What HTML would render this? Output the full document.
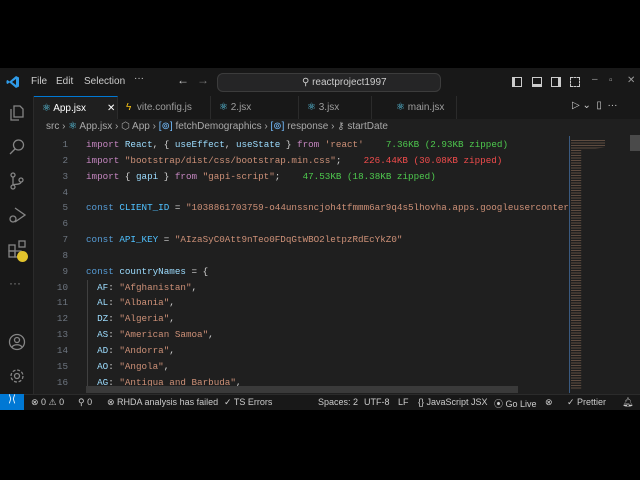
<!DOCTYPE html>
<html><head><meta charset="utf-8"><style>
*{margin:0;padding:0;box-sizing:border-box}
body{width:640px;height:480px;background:#000;position:relative;overflow:hidden;font-family:"Liberation Sans",sans-serif;color:#ccc}
.abs{position:absolute}
#win{left:0;top:68px;width:640px;height:342px;background:#1f1f1f}
#title{left:0;top:68px;width:640px;height:28px;background:#181818;font-size:10px;color:#ccc}
#act{left:0;top:96px;width:34px;height:298px;background:#181818;border-right:1px solid #2b2b2b}
#tabs{left:34px;top:96px;width:606px;height:23px;background:#181818;font-size:10px}
.tab{position:absolute;top:0;height:23px;line-height:23px;padding-left:8px;color:#9d9d9d;border-right:1px solid #2b2b2b}
.tab.on{background:#1f1f1f;color:#fff;border-top:1px solid #0078d4}
#crumb{left:46px;top:121px;font-size:10px;color:#a9a9a9;white-space:nowrap}
.ln{position:absolute;left:40px;width:28px;text-align:right;font-family:"Liberation Mono",monospace;font-size:9.25px;color:#6e7681}
.cd{position:absolute;left:86px;font-family:"Liberation Mono",monospace;font-size:9.25px;white-space:pre;color:#d4d4d4}
.k{color:#c586c0}.b{color:#569cd6}.v{color:#9cdcfe}.c{color:#4fc1ff}.s{color:#ce9178}.g{color:#4ec94e}.r{color:#f14c4c}
#status{left:0;top:394px;width:640px;height:16px;background:#181818;border-top:1px solid #2b2b2b;font-size:9px;color:#ccc}
#status span{position:absolute;top:2px;white-space:nowrap}
svg{position:absolute}
</style></head><body>
<div id="win" class="abs"></div>
<div id="title" class="abs">
 <svg style="left:6px;top:7px" width="14" height="14" viewBox="0 0 14 14"><path d="M10 1 L13 2.5 V11.5 L10 13 L3.5 7.5 L1.5 9 L0.5 8.3 V5.7 L1.5 5 L3.5 6.5 Z M10 4 L6 7 L10 10 Z" fill="#2f9be8"/></svg>
 <span class="abs" style="left:31px;top:8px">File</span>
 <span class="abs" style="left:56px;top:8px">Edit</span>
 <span class="abs" style="left:84px;top:8px">Selection</span>
 <span class="abs" style="left:134px;top:5px">···</span>
 <span class="abs" style="left:177px;top:5px;font-size:12px">←</span>
 <span class="abs" style="left:197px;top:5px;font-size:12px;color:#777">→</span>
 <div class="abs" style="left:217px;top:5px;width:224px;height:19px;border:1px solid #3c3c3c;border-radius:6px;background:#252526"></div>
 <span class="abs" style="left:302px;top:9px">⚲ reactproject1997</span>
 <div class="abs" style="left:512px;top:9px;width:10px;height:10px;border:1px solid #ccc;border-left-width:3px"></div>
 <div class="abs" style="left:532px;top:9px;width:10px;height:10px;border:1px solid #ccc;border-bottom-width:3px"></div>
 <div class="abs" style="left:551px;top:9px;width:10px;height:10px;border:1px solid #ccc;border-right-width:3px"></div>
 <div class="abs" style="left:570px;top:9px;width:10px;height:10px;border:1px dashed #ccc"></div>
 <span class="abs" style="left:592px;top:6px;color:#999">–</span>
 <span class="abs" style="left:609px;top:7px;color:#999">▫</span>
 <span class="abs" style="left:627px;top:7px;color:#999">✕</span>
</div>
<div id="act" class="abs">
 <svg style="left:8px;top:8px" width="18" height="18" viewBox="0 0 18 18" fill="none" stroke="#858585" stroke-width="1.3"><path d="M6 2h6l3 3v8H6z M3 5v11h8"/></svg>
 <svg style="left:8px;top:42px" width="18" height="18" viewBox="0 0 18 18" fill="none" stroke="#858585" stroke-width="1.3"><circle cx="10.5" cy="7" r="5"/><path d="M7 11 L2 16"/></svg>
 <svg style="left:8px;top:76px" width="18" height="18" viewBox="0 0 18 18" fill="none" stroke="#858585" stroke-width="1.3"><circle cx="5" cy="3" r="2"/><circle cx="5" cy="15" r="2"/><circle cx="13" cy="8" r="2"/><path d="M5 5v8 M13 10c0 3-8 2-8 3"/></svg>
 <svg style="left:8px;top:110px" width="18" height="18" viewBox="0 0 18 18" fill="none" stroke="#858585" stroke-width="1.3"><path d="M7 2l10 7-10 7"/><circle cx="5" cy="13" r="3"/></svg>
 <svg style="left:8px;top:144px" width="18" height="18" viewBox="0 0 18 18" fill="none" stroke="#858585" stroke-width="1.3"><rect x="1" y="5" width="6" height="6"/><rect x="1" y="11" width="6" height="6"/><rect x="7" y="11" width="6" height="6"/><rect x="11" y="1" width="6" height="6"/></svg>
 <div class="abs" style="left:17px;top:155px;width:11px;height:11px;border-radius:50%;background:#e2c32c"></div>
 <span class="abs" style="left:9px;top:180px;color:#858585;font-size:12px">···</span>
 <svg style="left:8px;top:237px" width="18" height="18" viewBox="0 0 18 18" fill="none" stroke="#858585" stroke-width="1.3"><circle cx="9" cy="9" r="7.5"/><circle cx="9" cy="7" r="2.5"/><path d="M4 14c2-3 8-3 10 0"/></svg>
 <svg style="left:8px;top:271px" width="18" height="18" viewBox="0 0 18 18" fill="none" stroke="#858585" stroke-width="1.3"><circle cx="9" cy="9" r="2.5"/><circle cx="9" cy="9" r="6" stroke-dasharray="3 1.7"/></svg>
</div>
<div id="tabs" class="abs">
 <div class="tab on" style="left:0;width:84px"><span style="color:#61dafb">⚛</span> App.jsx<span style="position:absolute;left:73px">✕</span></div>
 <div class="tab" style="left:84px;width:93px"><span style="color:#f9c513">ϟ</span>&nbsp; vite.config.js</div>
 <div class="tab" style="left:177px;width:88px"><span style="color:#61dafb">⚛</span> 2.jsx</div>
 <div class="tab" style="left:265px;width:73px"><span style="color:#61dafb">⚛</span> 3.jsx</div>
 <div class="tab" style="left:338px;width:85px;padding-left:24px"><span style="color:#61dafb">⚛</span> main.jsx</div>
 <span class="abs" style="left:538px;top:4px;color:#ccc">▷ ⌄ &nbsp;▯ &nbsp;···</span>
</div>
<div id="crumb" class="abs">src › <span style="color:#61dafb">⚛</span> App.jsx › ⬡ App › <span style="color:#75beff">[⊚]</span> fetchDemographics › <span style="color:#75beff">[⊚]</span> response › ⚷ startDate</div>

<div class="ln" style="top:139px">1</div><div class="cd" style="top:139px"><span class="k">import</span> <span class="v">React</span>, { <span class="v">useEffect</span>, <span class="v">useState</span> } <span class="k">from</span> <span class="s">'react'</span>    <span class="g">7.36KB (2.93KB zipped)</span></div>
<div class="ln" style="top:155px">2</div><div class="cd" style="top:155px"><span class="k">import</span> <span class="s">"bootstrap/dist/css/bootstrap.min.css"</span>;    <span class="r">226.44KB (30.08KB zipped)</span></div>
<div class="ln" style="top:171px">3</div><div class="cd" style="top:171px"><span class="k">import</span> { <span class="v">gapi</span> } <span class="k">from</span> <span class="s">"gapi-script"</span>;    <span class="g">47.53KB (18.38KB zipped)</span></div>
<div class="ln" style="top:187px">4</div>
<div class="ln" style="top:202px">5</div><div class="cd" style="top:202px"><span class="b">const</span> <span class="c">CLIENT_ID</span> = <span class="s">"1038861703759-o44unssncjoh4tfmmm6ar9q4s5lhovha.apps.googleuserconter</span></div>
<div class="ln" style="top:218px">6</div>
<div class="ln" style="top:234px">7</div><div class="cd" style="top:234px"><span class="b">const</span> <span class="c">API_KEY</span> = <span class="s">"AIzaSyC0Att9nTeo0FDqGtWBO2letpzRdEcYkZ0"</span></div>
<div class="ln" style="top:250px">8</div>
<div class="ln" style="top:266px">9</div><div class="cd" style="top:266px"><span class="b">const</span> <span class="v">countryNames</span> = {</div>
<div class="ln" style="top:282px">10</div><div class="cd" style="top:282px">  <span class="v">AF</span>: <span class="s">"Afghanistan"</span>,</div>
<div class="ln" style="top:297px">11</div><div class="cd" style="top:297px">  <span class="v">AL</span>: <span class="s">"Albania"</span>,</div>
<div class="ln" style="top:313px">12</div><div class="cd" style="top:313px">  <span class="v">DZ</span>: <span class="s">"Algeria"</span>,</div>
<div class="ln" style="top:329px">13</div><div class="cd" style="top:329px">  <span class="v">AS</span>: <span class="s">"American Samoa"</span>,</div>
<div class="ln" style="top:345px">14</div><div class="cd" style="top:345px">  <span class="v">AD</span>: <span class="s">"Andorra"</span>,</div>
<div class="ln" style="top:361px">15</div><div class="cd" style="top:361px">  <span class="v">AO</span>: <span class="s">"Angola"</span>,</div>
<div class="ln" style="top:377px">16</div><div class="cd" style="top:377px">  <span class="v">AG</span>: <span class="s">"Antigua and Barbuda"</span>,</div>
<div class="abs" style="left:87px;top:280px;width:1px;height:113px;background:#404040"></div>
<div class="abs" style="left:86px;top:386px;width:432px;height:7px;background:#3a3a3a"></div>
<div class="abs" style="left:569px;top:136px;width:1px;height:257px;background:#3a5a80"></div>
<div class="abs" style="left:571px;top:140px;width:34px;height:250px;background:repeating-linear-gradient(180deg,#8a6a55 0 1px,transparent 1px 2.5px);opacity:.6;clip-path:polygon(0 0,100% 0,100% 3%,30% 4%,30% 100%,0 100%)"></div>
<div class="abs" style="left:630px;top:135px;width:10px;height:16px;background:#4a4a4a"></div>
<div id="status" class="abs">
 <div class="abs" style="left:0;top:-1px;width:24px;height:16px;background:#0078d4;color:#fff;text-align:center;font-size:10px">⟩⟨</div>
 <span style="left:31px">⊗ 0 ⚠ 0</span>
 <span style="left:78px">⚲ 0</span>
 <span style="left:107px">⊗ RHDA analysis has failed</span>
 <span style="left:224px">✓ TS Errors</span>
 <span style="left:318px">Spaces: 2</span>
 <span style="left:364px">UTF-8</span>
 <span style="left:398px">LF</span>
 <span style="left:418px">{} JavaScript JSX</span>
 <span style="left:494px">⦿ Go Live</span>
 <span style="left:545px">⊗</span>
 <span style="left:567px">✓ Prettier</span>
 <span style="left:622px">🔔︎</span>
</div>
</body></html>
